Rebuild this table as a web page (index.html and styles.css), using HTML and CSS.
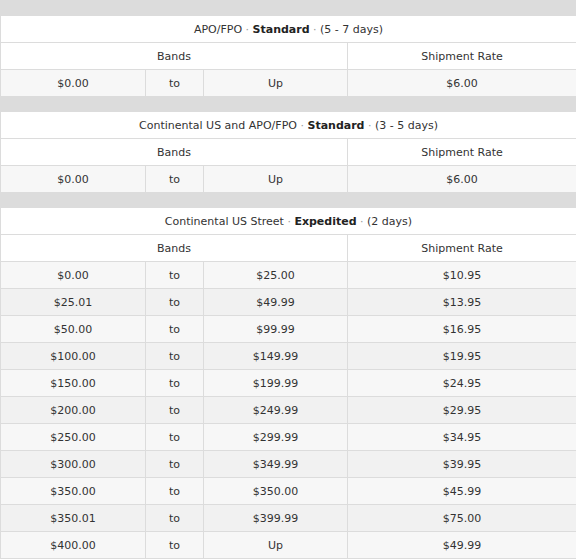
FILE: index.html
```html
<!DOCTYPE html>
<html>
<head>
<meta charset="utf-8">
<link rel="stylesheet" href="styles.css">
</head>
<body>
<div class="page">
  <section class="group group-first">
    <div class="row title"><div class="cell"><span class="caption">APO/FPO <span class="sep">·</span> <b>Standard</b> <span class="sep">·</span> (5 - 7 days)</span></div></div>
    <div class="row head"><div class="cell bands">Bands</div><div class="cell">Shipment Rate</div></div>
    <div class="row data"><div class="cell">$0.00</div><div class="cell">to</div><div class="cell">Up</div><div class="cell">$6.00</div></div>
  </section>
  <section class="group">
    <div class="row title"><div class="cell"><span class="caption">Continental US and APO/FPO <span class="sep">·</span> <b>Standard</b> <span class="sep">·</span> (3 - 5 days)</span></div></div>
    <div class="row head"><div class="cell bands">Bands</div><div class="cell">Shipment Rate</div></div>
    <div class="row data"><div class="cell">$0.00</div><div class="cell">to</div><div class="cell">Up</div><div class="cell">$6.00</div></div>
  </section>
  <section class="group">
    <div class="row title"><div class="cell"><span class="caption">Continental US Street <span class="sep">·</span> <b>Expedited</b> <span class="sep">·</span> (2 days)</span></div></div>
    <div class="row head"><div class="cell bands">Bands</div><div class="cell">Shipment Rate</div></div>
    <div class="row data"><div class="cell">$0.00</div><div class="cell">to</div><div class="cell">$25.00</div><div class="cell">$10.95</div></div>
    <div class="row data"><div class="cell">$25.01</div><div class="cell">to</div><div class="cell">$49.99</div><div class="cell">$13.95</div></div>
    <div class="row data"><div class="cell">$50.00</div><div class="cell">to</div><div class="cell">$99.99</div><div class="cell">$16.95</div></div>
    <div class="row data"><div class="cell">$100.00</div><div class="cell">to</div><div class="cell">$149.99</div><div class="cell">$19.95</div></div>
    <div class="row data"><div class="cell">$150.00</div><div class="cell">to</div><div class="cell">$199.99</div><div class="cell">$24.95</div></div>
    <div class="row data"><div class="cell">$200.00</div><div class="cell">to</div><div class="cell">$249.99</div><div class="cell">$29.95</div></div>
    <div class="row data"><div class="cell">$250.00</div><div class="cell">to</div><div class="cell">$299.99</div><div class="cell">$34.95</div></div>
    <div class="row data"><div class="cell">$300.00</div><div class="cell">to</div><div class="cell">$349.99</div><div class="cell">$39.95</div></div>
    <div class="row data"><div class="cell">$350.00</div><div class="cell">to</div><div class="cell">$350.00</div><div class="cell">$45.99</div></div>
    <div class="row data"><div class="cell">$350.01</div><div class="cell">to</div><div class="cell">$399.99</div><div class="cell">$75.00</div></div>
    <div class="row data"><div class="cell">$400.00</div><div class="cell">to</div><div class="cell">Up</div><div class="cell">$49.99</div></div>
  </section>
</div>
</body>
</html>
```

FILE: styles.css
```css
html, body {
  margin: 0;
  padding: 0;
  background: #dcdcdc;
}

.page {
  font-family: "DejaVu Sans", Verdana, sans-serif;
  font-size: 11px;
  color: #333;
  width: 576px;
}

.group {
  margin-top: 15px;
  border-left: 1px solid #dcdcdc;
}

.group-first {
  margin-top: 16px;
}

.row {
  display: grid;
  grid-template-columns: 145px 58px 144px 1fr;
  height: 27px;
  box-sizing: border-box;
  border-bottom: 1px solid #dcdcdc;
}

.cell {
  display: flex;
  align-items: center;
  justify-content: center;
  border-right: 1px solid #dcdcdc;
  white-space: nowrap;
}

.cell:last-child {
  border-right: none;
}

.title {
  background: #fff;
  grid-template-columns: 1fr;
}

.caption {
  white-space: pre;
}

.title b {
  font-weight: bold;
  color: #222;
}

.sep {
  color: #999;
}

.head {
  background: #fff;
  grid-template-columns: 347px 1fr;
}

.data {
  background: #f7f7f7;
}

.data:nth-child(even) {
  background: #f1f1f1;
}
```
